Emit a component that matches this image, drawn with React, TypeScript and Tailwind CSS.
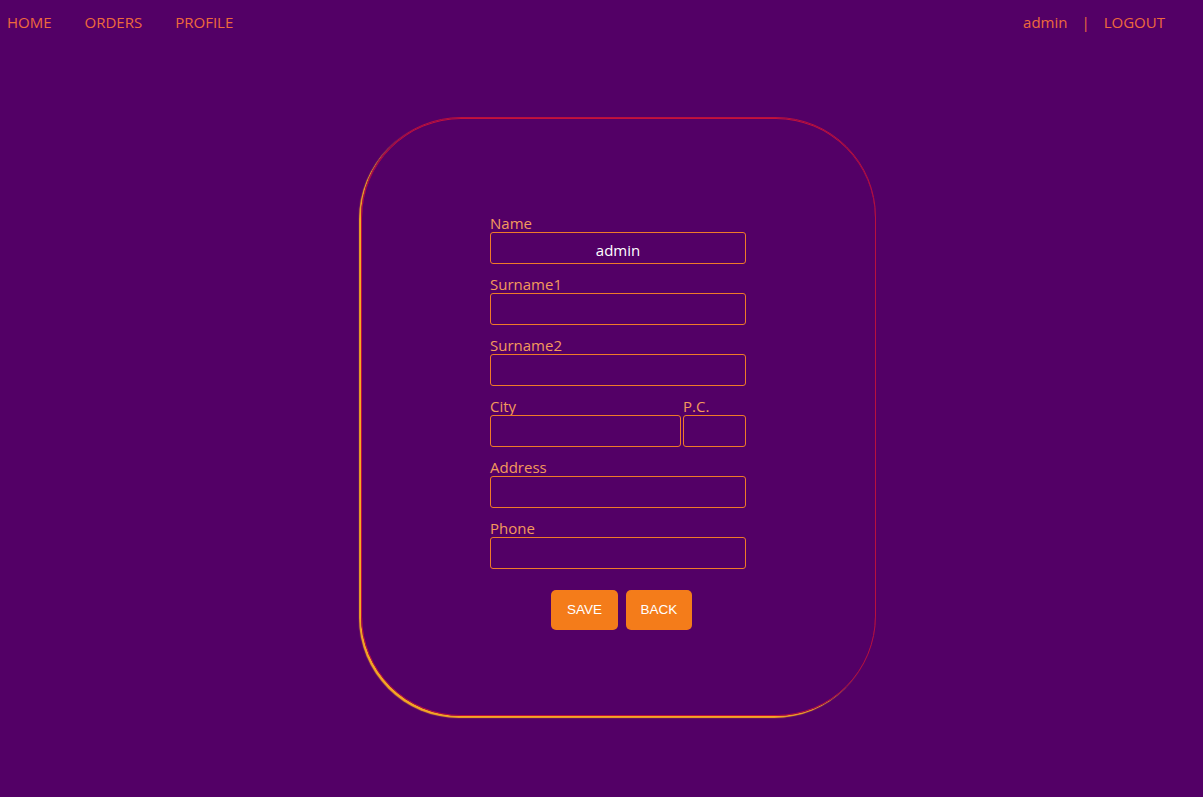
import React from "react";

const font = { fontFamily: '"Open Sans", "Noto Sans", sans-serif' };

function Field({ label, value, className = "" }: { label: string; value?: string; className?: string }) {
  return (
    <div className={`flex flex-col ${className}`}>
      <label className="text-[15px] leading-[18px] text-[#f39a5c]">{label}</label>
      <input
        readOnly
        value={value ?? ""}
        className="h-[32px] w-full rounded-[3px] border border-[#f07a28] bg-transparent pt-[3px] text-center text-[15px] text-white outline-none"
        style={font}
      />
    </div>
  );
}

export default function App() {
  return (
    <div className="min-h-[797px] w-full bg-[#530066]" style={font}>
      <nav className="flex h-[44px] items-center justify-between pl-[7px] pr-[38px] text-[15px] text-[#ee6a3c]">
        <div className="flex gap-[33px]">
          <span>HOME</span>
          <span>ORDERS</span>
          <span>PROFILE</span>
        </div>
        <div className="flex">
          <span>admin</span>
          <span className="ml-[14px]">|</span>
          <span className="ml-[14px]">LOGOUT</span>
        </div>
      </nav>
      <div className="flex justify-center pt-[73px]">
        <div className="ml-[33px] flex h-[599px] w-[515px] flex-col items-center rounded-[100px] border border-[#b8103e] pt-[96px] shadow-[-2px_2px_1px_#f6a823,inset_0_1px_0_#c4123c]">
          <div className="flex w-[256px] flex-col gap-[11px]">
            <Field label="Name" value="admin" />
            <Field label="Surname1" />
            <Field label="Surname2" />
            <div className="flex gap-[2px]">
              <Field label="City" className="w-[191px]" />
              <Field label="P.C." className="w-[63px]" />
            </div>
            <Field label="Address" />
            <Field label="Phone" />
          </div>
          <div className="mt-[21px] flex gap-[8px] pl-[7px]">
            <button
              className="h-[40px] w-[67px] rounded-[5px] bg-[#f47c1a] text-[13.5px] text-white"
              style={{ fontFamily: '"Liberation Sans", Arial, sans-serif' }}
            >
              SAVE
            </button>
            <button
              className="h-[40px] w-[66px] rounded-[5px] bg-[#f47c1a] text-[13.5px] text-white"
              style={{ fontFamily: '"Liberation Sans", Arial, sans-serif' }}
            >
              BACK
            </button>
          </div>
        </div>
      </div>
    </div>
  );
}
